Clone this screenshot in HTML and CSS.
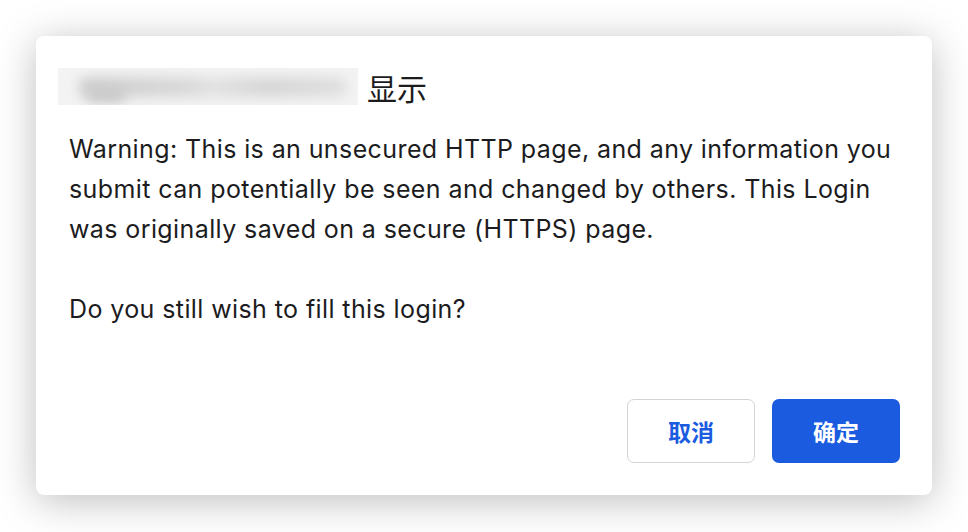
FILE: index.html
```html
<!DOCTYPE html>
<html>
<head>
<meta charset="utf-8">
<link rel="stylesheet" href="styles.css">
</head>
<body>
<div class="dialog">
  <div class="title">
    <div class="blur"><div class="blur-inner"></div><div class="blur-dot"></div></div>
    <span class="title-text">显示</span>
  </div>
  <div class="message">
    <p>Warning: This is an unsecured HTTP page, and any information you submit can potentially be seen and changed by others. This Login was originally saved on a secure (HTTPS) page.</p>
    <p>Do you still wish to fill this login?</p>
  </div>
  <div class="actions">
    <button class="btn btn-cancel">取消</button>
    <button class="btn btn-ok">确定</button>
  </div>
</div>
</body>
</html>
```

FILE: styles.css
```css
html, body {
  margin: 0;
  padding: 0;
  background: #ffffff;
  width: 968px;
  height: 532px;
  overflow: hidden;
}
body {
  font-family: Inter, "Noto Sans CJK SC", sans-serif;
  color: #1c1c1e;
  padding: 36px;
  box-sizing: border-box;
}
.dialog {
  width: 896px;
  height: 459px;
  background: #fff;
  border-radius: 8px;
  box-shadow: 0 6px 40px rgba(0,0,0,0.26);
  box-sizing: border-box;
  padding: 32px 32px 32px 33px;
  display: flex;
  flex-direction: column;
}
.title {
  display: flex;
  align-items: center;
  height: 37px;
  margin-left: -11px;
}
.blur {
  width: 300px;
  height: 37px;
  background: #f3f3f3;
  overflow: hidden;
  position: relative;
}
.blur-inner {
  position: absolute;
  left: 20px;
  top: 9px;
  width: 270px;
  height: 20px;
  background: linear-gradient(90deg, #cfcfcf, #d8d8d8 40%, #e2e2e2 50%, #d6d6d6 70%, #e0e0e0);
  filter: blur(6px);
  border-radius: 10px;
}
.blur-dot {
  position: absolute;
  left: 28px;
  top: 20px;
  width: 40px;
  height: 14px;
  background: #c8c8c8;
  filter: blur(6px);
  border-radius: 7px;
}
.title-text {
  font-family: "Noto Sans CJK SC", sans-serif;
  font-size: 30px;
  margin-left: 9px;
  color: #1c1c1e;
}
.message {
  margin-top: 24px;
  font-size: 25px;
  line-height: 40px;
  letter-spacing: 0.4px;
}
.message p {
  margin: 0 0 40px 0;
}
.actions {
  margin-top: auto;
  display: flex;
  justify-content: flex-end;
  gap: 17px;
}
.btn {
  width: 128px;
  height: 64px;
  border-radius: 7px;
  font-family: "Noto Sans CJK SC", sans-serif;
  font-weight: 700;
  font-size: 23px;
  cursor: pointer;
}
.btn-cancel {
  background: #fff;
  border: 1px solid #d4d4d8;
  color: #1a5be0;
}
.btn-ok {
  background: #1a5be0;
  border: none;
  color: #fff;
}
```
